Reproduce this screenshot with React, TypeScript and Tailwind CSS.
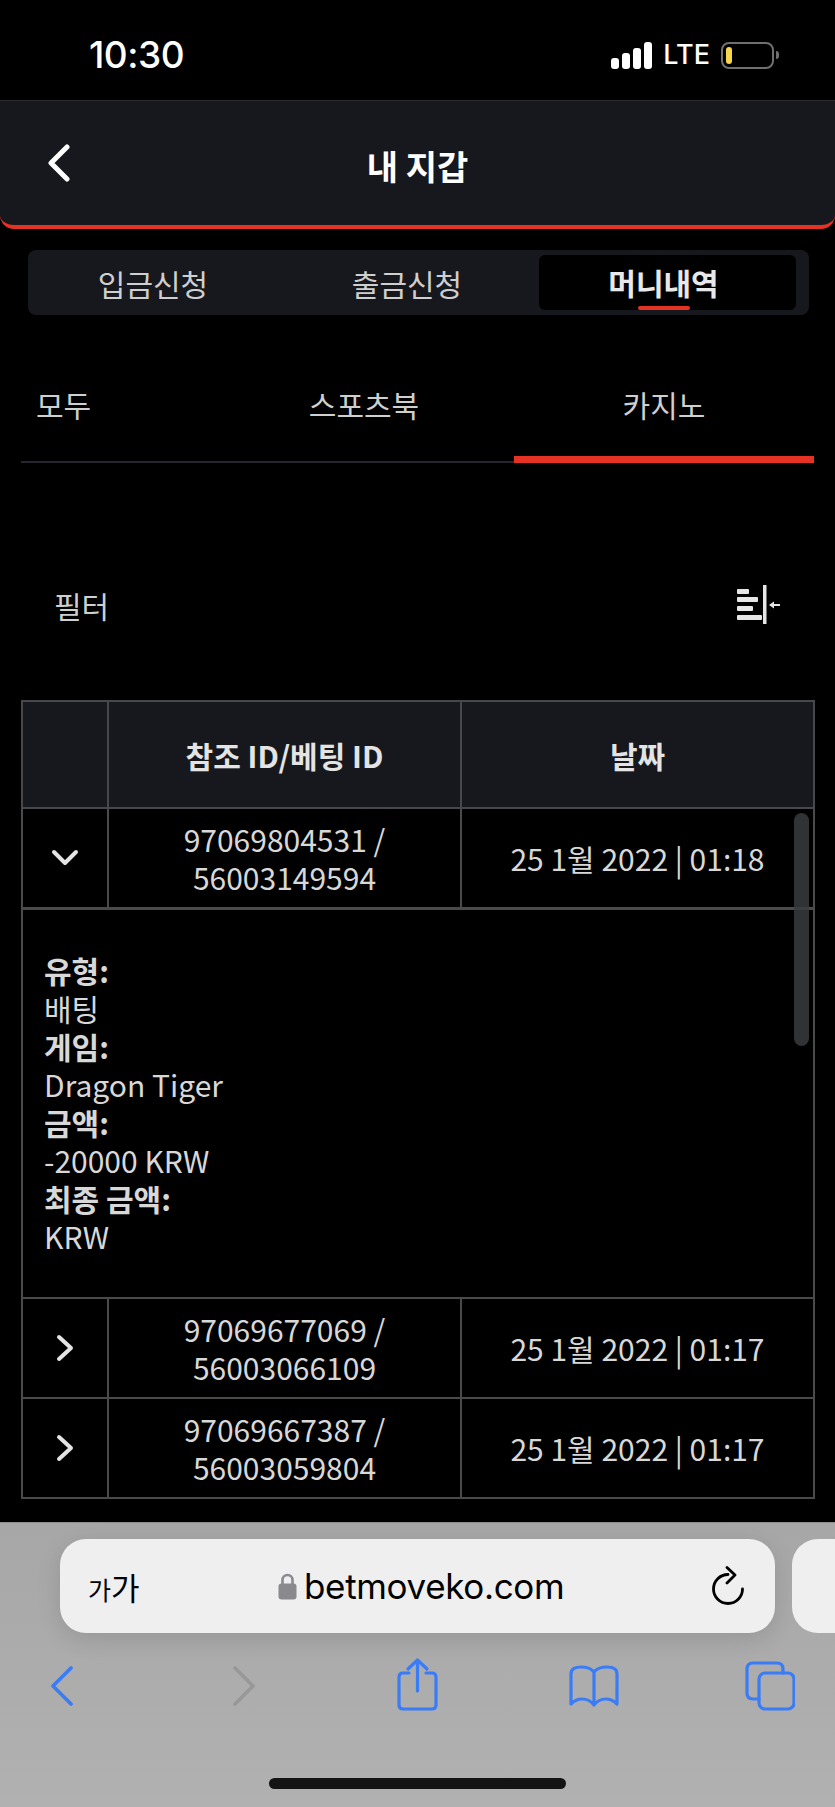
const rows = [
  { ids: ['97069677069 /', '56003066109'], date: '25 1월 2022 | 01:17' },
  { ids: ['97069667387 /', '56003059804'], date: '25 1월 2022 | 01:17' },
]

const details = [
  ['유형:', '배팅'],
  ['게임:', 'Dragon Tiger'],
  ['금액:', '-20000 KRW'],
  ['최종 금액:', 'KRW'],
]

function Chevron({ open }: { open?: boolean }) {
  return (
    <svg width="30" height="30" viewBox="0 0 30 30" className="mx-auto" fill="none" stroke="#e4e4e4" strokeWidth="4" strokeLinecap="round" strokeLinejoin="round">
      {open ? <path d="M4 9 L15 20 L26 9" /> : <path d="M9 4 L21 15 L9 26" />}
    </svg>
  )
}

function StatusBar() {
  return (
    <div className="flex h-[100px] items-start pl-[89px] pr-[56px] pt-[35px] text-white">
      <span className="font-['Inter',sans-serif] text-[37px] font-medium leading-[40px] tracking-[-0.5px]">10:30</span>
      <div className="ml-auto flex items-center pt-[6px]">
        <div className="flex h-[27px] items-end gap-[3px]">
          <div className="h-[11px] w-[8px] rounded-[3px] bg-white" />
          <div className="h-[16px] w-[8px] rounded-[3px] bg-white" />
          <div className="h-[21px] w-[8px] rounded-[3px] bg-white" />
          <div className="h-[27px] w-[8px] rounded-[3px] bg-white" />
        </div>
        <span className="ml-[11px] font-['Inter',sans-serif] text-[27px] font-medium leading-[28px]">LTE</span>
        <div className="ml-[11px] h-[27px] w-[53px] rounded-[8px] border-2 border-[#6f6f6f] p-[3px]">
          <div className="h-full w-[6px] rounded-[3px] bg-[#f7d64a]" />
        </div>
        <div className="ml-[2px] h-[8px] w-[3px] rounded-r-[3px] bg-[#6f6f6f]" />
      </div>
    </div>
  )
}

function FilterIcon() {
  return (
    <svg width="44" height="40" viewBox="0 0 44 40" fill="#e6e6e6">
      <rect x="0" y="4" width="12" height="5" rx="1" />
      <rect x="0" y="12" width="21" height="5" rx="1" />
      <rect x="0" y="21" width="16" height="5" rx="1" />
      <rect x="0" y="30" width="25" height="5" rx="1" />
      <rect x="26" y="0" width="3.5" height="39" />
      <path d="M32 20 L37 16.5 V19 H43 V21 H37 V23.5 Z" />
    </svg>
  )
}

function BrowserBar() {
  return (
    <div className="flex h-[285px] flex-col overflow-hidden border-t border-[#8e8e8e] bg-gradient-to-b from-[#a7a7a7] to-[#b1b1b1]">
      <div className="mt-[16px] flex gap-[17px] pl-[60px]">
        <div className="flex h-[94px] w-[715px] shrink-0 items-center rounded-[26px] bg-[#efefef] pl-[28px] pr-[30px] text-black shadow-[0_6px_24px_rgba(0,0,0,0.12)]">
          <span className="flex w-[190px] items-baseline">
            <span className="text-[25px] leading-none">가</span>
            <span className="text-[31px] leading-none">가</span>
          </span>
          <svg width="19" height="28" viewBox="0 0 19 28" className="shrink-0">
            <path d="M4.5 13 V8 a5 5 0 0 1 10 0 V13" fill="none" stroke="#8a8a8e" strokeWidth="2.6" />
            <rect x="0.5" y="11.5" width="18" height="16" rx="3" fill="#8a8a8e" />
          </svg>
          <span className="ml-[7px] font-['Inter',sans-serif] text-[35px] leading-none tracking-[-0.35px]">betmoveko.com</span>
          <svg width="34" height="40" viewBox="0 0 34 40" className="ml-auto shrink-0" fill="none" stroke="#000" strokeWidth="2.8" strokeLinecap="round" strokeLinejoin="round">
            <path d="M17 8.5 A14.5 14.5 0 1 0 31.5 23" />
            <path d="M16 1.5 L24 9 L16 17" />
          </svg>
        </div>
        <div className="h-[94px] w-[100px] shrink-0 rounded-[26px] bg-[#efefef]" />
      </div>
      <div className="mt-[24px] flex h-[56px] pl-[51px]" >
        <svg width="22" height="56" viewBox="0 0 22 56" fill="none" stroke="#3a7cf5" strokeWidth="3.6" strokeLinecap="round" strokeLinejoin="round">
          <path d="M20 11 L2 29 L20 47" />
        </svg>
        <svg width="22" height="56" viewBox="0 0 22 56" className="ml-[160px]" fill="none" stroke="#989898" strokeWidth="3.6" strokeLinecap="round" strokeLinejoin="round">
          <path d="M2 11 L20 29 L2 47" />
        </svg>
        <svg width="43" height="56" viewBox="0 0 43 56" className="ml-[141px]" fill="none" stroke="#3a7cf5" strokeWidth="3.2" strokeLinecap="round" strokeLinejoin="round">
          <path d="M13 16 H7 Q3 16 3 20 V48 Q3 52 7 52 H36 Q40 52 40 48 V20 Q40 16 36 16 H30" />
          <path d="M21.5 34 V3 M12 12 L21.5 3 L31 12" />
        </svg>
        <svg width="50" height="56" viewBox="0 0 50 56" className="ml-[130px]" fill="none" stroke="#3a7cf5" strokeWidth="3.2" strokeLinecap="round" strokeLinejoin="round">
          <path d="M25 15 C22 11 17 10 12 10 C6 10 2 12 2 17 V47 C6 43 10 42 13 42 C18 42 22 44 25 48 C28 44 32 42 37 42 C40 42 44 43 48 47 V17 C48 12 44 10 38 10 C33 10 28 11 25 15 Z M25 15 V48" />
        </svg>
        <svg width="50" height="56" viewBox="0 0 50 56" className="ml-[126px]" fill="none" stroke="#3a7cf5" strokeWidth="3.2" strokeLinecap="round" strokeLinejoin="round">
          <path d="M14 42 H8 Q2 42 2 36 V12 Q2 6 8 6 H32 Q38 6 38 12 V16" />
          <rect x="14" y="16" width="35" height="36" rx="6" />
        </svg>
      </div>
      <div className="mx-auto mt-[65px] h-[11px] w-[297px] rounded-full bg-[#141414]" />
    </div>
  )
}

export default function App() {
  return (
    <div className="flex h-[1807px] w-[835px] flex-col overflow-hidden bg-black font-['Noto_Sans_CJK_KR','Noto_Sans',sans-serif] text-[#d8d8d8]">
      <StatusBar />

      <header className="grid h-[129px] grid-cols-[1fr_auto_1fr] items-center rounded-b-[14px] border-t border-b-4 border-t-[#2b2c30] border-b-[#e53222] bg-[#17181d] px-[47px]">
        <svg width="24" height="38" viewBox="0 0 24 38" fill="none" stroke="#fff" strokeWidth="5" strokeLinecap="round" strokeLinejoin="round">
          <path d="M20 3 L4 19 L20 35" />
        </svg>
        <h1 className="pt-[6px] text-[34px] font-bold leading-[40px] text-white">내 지갑</h1>
        <div />
      </header>

      <div className="ml-[28px] mr-[26px] mt-[21px] grid h-[65px] grid-cols-[250px_258px_1fr] items-center rounded-[8px] bg-[#17181d] text-[30px] leading-[40px]">
        <div className="text-center text-[#cfcfcf]">입금신청</div>
        <div className="text-center text-[#cfcfcf]">출금신청</div>
        <div className="relative ml-[3px] mr-[13px] h-[55px] rounded-[6px] bg-black pr-[8px] pt-[7px] text-center font-bold text-[#e8e8e8]">
          머니내역
          <div className="absolute bottom-0 left-[99px] h-[4px] w-[52px] rounded-full bg-[#e53222]" />
        </div>
      </div>

      <div className="mx-[21px] mt-[60px] grid h-[88px] grid-cols-[193px_300px_300px] border-b-2 border-[#25262f] text-[30px] leading-[40px] text-[#cfcfcf]">
        <div className="pl-[15px] pt-[9px]">모두</div>
        <div className="pt-[9px] text-center">스포츠북</div>
        <div className="-mb-[2px] border-b-[7px] border-[#e53222] pt-[9px] text-center">카지노</div>
      </div>

      <div className="mt-[122px] flex h-[40px] items-center justify-between pl-[54px] pr-[54px]">
        <span className="text-[30px] leading-[40px] text-[#cfcfcf]">필터</span>
        <FilterIcon />
      </div>

      <div className="relative mx-[21px] mt-[75px] w-[794px]">
        <table className="w-full table-fixed border-collapse text-center text-[30px] leading-[38px]">
          <colgroup>
            <col className="w-[86px]" />
            <col className="w-[353px]" />
            <col />
          </colgroup>
          <thead>
            <tr className="h-[107px] bg-[#17181d] font-bold text-[#e4e4e4]">
              <th className="border-2 border-[#47484b]" />
              <th className="border-2 border-[#47484b]">참조 ID/베팅 ID</th>
              <th className="border-2 border-[#47484b]">날짜</th>
            </tr>
          </thead>
          <tbody>
            <tr className="h-[100px]">
              <td className="border-2 border-b-[3px] border-[#4a4a4c]"><Chevron open /></td>
              <td className="border-2 border-b-[3px] border-[#4a4a4c]">97069804531 /<br />56003149594</td>
              <td className="border-2 border-b-[3px] border-[#4a4a4c]">25 1월 2022 | 01:18</td>
            </tr>
            <tr className="h-[390px]">
              <td colSpan={3} className="border-2 border-[#4a4a4c] pl-[21px] text-left">
                {details.map(([label, value]) => (
                  <div key={label}>
                    <div className="font-bold">{label}</div>
                    <div>{value}</div>
                  </div>
                ))}
              </td>
            </tr>
            {rows.map((row) => (
              <tr key={row.ids[0]} className="h-[100px]">
                <td className="border-2 border-[#4a4a4c]"><Chevron /></td>
                <td className="border-2 border-[#4a4a4c]">{row.ids[0]}<br />{row.ids[1]}</td>
                <td className="border-2 border-[#4a4a4c]">{row.date}</td>
              </tr>
            ))}
          </tbody>
        </table>
        <div className="absolute right-[6px] top-[113px] h-[233px] w-[15px] rounded-full bg-[#3a3b3d]/85" />
      </div>

      <div className="flex-1" />
      <BrowserBar />
    </div>
  )
}
